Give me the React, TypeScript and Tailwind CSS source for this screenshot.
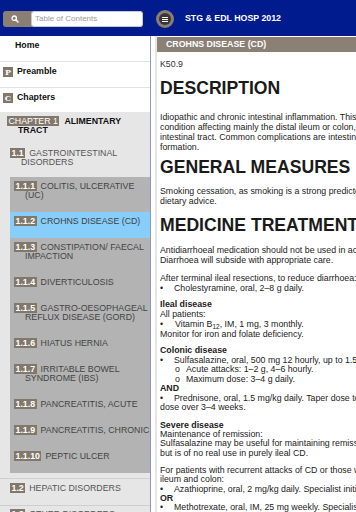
import React from "react";

function Badge({ children, bold = true }: { children: React.ReactNode; bold?: boolean }) {
  return (
    <span className={bold ? "bg-[#82776b] text-white px-[1.5px] mr-[4px] font-bold" : "bg-[#82776b] text-white px-[1.5px] mr-[5px]"}>
      {children}
    </span>
  );
}

function SubItem({ num, lines, active = false }: { num: string; lines: string[]; active?: boolean }) {
  return (
    <div
      className={
        active
          ? "bg-[#87cefa] pt-[5px] pb-[12px] pl-[15px] indent-[-11px] leading-[9px] whitespace-nowrap text-[#3f3f3f]"
          : "pt-[5px] pb-[12px] pl-[15px] indent-[-11px] leading-[9px] whitespace-nowrap text-[#444]"
      }
    >
      <Badge>{num}</Badge>
      {lines.map((l, i) => (
        <React.Fragment key={i}>
          {i > 0 && <br />}
          {l}
        </React.Fragment>
      ))}
    </div>
  );
}

function Bullet({ children, w = "w-[14px]" }: { children: React.ReactNode; w?: string }) {
  return (
    <div className="flex whitespace-nowrap">
      <span className={w === "w-[15px]" ? "w-[15px] shrink-0" : "w-[14px] shrink-0"}>•</span>
      <span>{children}</span>
    </div>
  );
}

function SubBullet({ children }: { children: React.ReactNode }) {
  return (
    <div className="flex whitespace-nowrap pl-[15px]">
      <span className="w-[11px] shrink-0">o</span>
      <span>{children}</span>
    </div>
  );
}

export default function App() {
  return (
    <div className="w-[356px] h-[512px] overflow-hidden flex flex-col bg-white font-['Liberation_Sans',Arial,sans-serif] text-[8.8px]">
      {/* Header */}
      <div className="h-[36px] shrink-0 bg-[#001b8e] flex items-start">
        <div className="ml-[3px] mt-[11px] w-[140px] h-[16px] flex rounded-[3px] bg-[#8a7f72]">
          <div className="w-[28px] flex items-center pl-[8px]">
            <svg width="8" height="8" viewBox="0 0 8 8">
              <circle cx="3.2" cy="3.2" r="2.2" fill="none" stroke="white" strokeWidth="1.3" />
              <line x1="4.8" y1="4.8" x2="7" y2="7" stroke="white" strokeWidth="1.5" strokeLinecap="round" />
            </svg>
          </div>
          <div className="flex-1 bg-white rounded-[3px] border border-[#c9c9c9] flex items-center pl-[3px] text-[8px] text-[#9a9a9a] leading-none">
            Table of Contents
          </div>
        </div>
        <div className="ml-[13px] mt-[10px] w-[18px] h-[18px] rounded-full bg-[#8a7f72] flex items-center justify-center">
          <div className="w-[12px] h-[12px] rounded-full bg-[#3a3632] flex flex-col items-center justify-center gap-[1px]">
            <div className="w-[6px] h-[1px] bg-white" />
            <div className="w-[6px] h-[1px] bg-white" />
            <div className="w-[6px] h-[1px] bg-white" />
          </div>
        </div>
        <div className="ml-[11px] mt-[13px] leading-[10px] text-white font-bold whitespace-nowrap">STG &amp; EDL HOSP 2012</div>
      </div>

      {/* Body */}
      <div className="flex flex-1 min-h-0">
        {/* Sidebar */}
        <div className="w-[151px] shrink-0 border-r border-[#8f94c2] overflow-hidden bg-white">
          <div className="h-[26px] border-b border-[#e2e2e2] pt-[5px] pl-[15px] leading-[9px] font-bold text-[#111]">Home</div>
          <div className="h-[26px] border-b border-[#e2e2e2] pt-[5px] pl-[3px] flex items-start">
            <span className="w-[10px] h-[10px] bg-[#82776b] text-white font-bold font-['DejaVu_Serif',serif] text-[8px] leading-[10px] text-center mr-[4px]">P</span>
            <span className="leading-[9px] font-bold text-[#111]">Preamble</span>
          </div>
          <div className="h-[24px] pt-[5px] pl-[3px] flex items-start">
            <span className="w-[10px] h-[10px] bg-[#82776b] text-white font-bold font-['DejaVu_Serif',serif] text-[8px] leading-[10px] text-center mr-[4px]">C</span>
            <span className="leading-[9px] font-bold text-[#111]">Chapters</span>
          </div>

          <div className="bg-[#e6e6e6] h-full">
            <div className="pt-[5px] pb-[9px] pl-[18px] indent-[-11px] leading-[9px] whitespace-nowrap">
              <Badge bold={false}>CHAPTER 1</Badge>
              <span className="font-bold text-[#111]">ALIMENTARY</span>
              <br />
              <span className="font-bold text-[#111]">TRACT</span>
            </div>
            <div className="pt-[5px] pb-[5px] border-b border-[#cfcfcf]">
              <div className="pl-[21px] indent-[-11px] leading-[9px] whitespace-nowrap text-[#555]">
                <Badge>1.1</Badge>GASTROINTESTINAL
                <br />
                DISORDERS
              </div>
              <div className="mt-[10px] ml-[10px] bg-[#b3b3b3]">
                <SubItem num="1.1.1" lines={["COLITIS, ULCERATIVE", "(UC)"]} />
                <SubItem num="1.1.2" lines={["CROHNS DISEASE (CD)"]} active />
                <SubItem num="1.1.3" lines={["CONSTIPATION/ FAECAL", "IMPACTION"]} />
                <SubItem num="1.1.4" lines={["DIVERTICULOSIS"]} />
                <SubItem num="1.1.5" lines={["GASTRO-OESOPHAGEAL", "REFLUX DISEASE (GORD)"]} />
                <SubItem num="1.1.6" lines={["HIATUS HERNIA"]} />
                <SubItem num="1.1.7" lines={["IRRITABLE BOWEL", "SYNDROME (IBS)"]} />
                <SubItem num="1.1.8" lines={["PANCREATITIS, ACUTE"]} />
                <SubItem num="1.1.9" lines={["PANCREATITIS, CHRONIC"]} />
                <SubItem num="1.1.10" lines={["PEPTIC ULCER"]} />
              </div>
            </div>
            <div className="h-[27px] pt-[5px] pl-[10px] leading-[9px] whitespace-nowrap text-[#555] border-b border-[#cfcfcf]">
              <Badge>1.2</Badge>HEPATIC DISORDERS
            </div>
            <div className="pt-[4px] pl-[10px] leading-[9px] whitespace-nowrap text-[#555]">
              <Badge>1.3</Badge>OTHER DISORDERS
            </div>
          </div>
        </div>

        {/* Content */}
        <div className="flex-1 min-w-0 pl-[4px] overflow-hidden">
          <div className="h-full border-l-2 border-[#e6e6e6] overflow-hidden">
            <div className="mt-[1px] h-[15px] leading-[15px] pl-[9px] bg-[#8a8075] text-white font-bold whitespace-nowrap">
              CROHNS DISEASE (CD)
            </div>
            <div className="px-[3px] text-[#222] whitespace-nowrap">
              <div className="mt-[7px] leading-[10px] text-[#333]">K50.9</div>
              <div className="mt-[9px] h-[20px] leading-[20px] text-[17.6px] font-bold text-[#1a1a1a]">DESCRIPTION</div>
              <div className="mt-[14px] leading-[10px]">
                <div>Idiopathic and chronic intestinal inflammation. This is a transmural</div>
                <div>condition affecting mainly the distal ileum or colon, but may affect the entire</div>
                <div>intestinal tract. Common complications are intestinal obstruction and fistula</div>
                <div>formation.</div>
              </div>
              <div className="mt-[5px] h-[20px] leading-[20px] text-[17.6px] font-bold text-[#1a1a1a]">GENERAL MEASURES</div>
              <div className="mt-[9px] leading-[10px]">
                <div>Smoking cessation, as smoking is a strong predictor of relapse. Nutritional and</div>
                <div>dietary advice.</div>
              </div>
              <div className="mt-[9px] h-[20px] leading-[20px] text-[17.6px] font-bold text-[#1a1a1a]">MEDICINE TREATMENT</div>
              <div className="mt-[10px] leading-[10px]">
                <div>Antidiarrhoeal medication should not be used in acute attacks.</div>
                <div>Diarrhoea will subside with appropriate care.</div>
              </div>
              <div className="mt-[9px] leading-[9.5px]">
                <div>After terminal ileal resections, to reduce diarrhoea:</div>
                <Bullet>Cholestyramine, oral, 2–8 g daily.</Bullet>
              </div>
              <div className="mt-[6px] leading-[10px]">
                <div className="font-bold">Ileal disease</div>
                <div>All patients:</div>
                <Bullet w="w-[15px]">
                  Vitamin B<sub className="text-[6.5px] leading-none">12</sub>, IM, 1 mg, 3 monthly.
                </Bullet>
                <div>Monitor for iron and folate deficiency.</div>
              </div>
              <div className="mt-[7px] leading-[9.5px]">
                <div className="font-bold">Colonic disease</div>
                <Bullet>Sulfasalazine, oral, 500 mg 12 hourly, up to 1.5 g 12 hourly.</Bullet>
                <SubBullet>Acute attacks: 1–2 g, 4–6 hourly.</SubBullet>
                <SubBullet>Maximum dose: 3–4 g daily.</SubBullet>
                <div className="font-bold">AND</div>
                <Bullet>Prednisone, oral, 1.5 mg/kg daily. Taper dose to the lowest effective</Bullet>
                <div>dose over 3–4 weeks.</div>
              </div>
              <div className="mt-[8px] leading-[9.4px]">
                <div className="font-bold">Severe disease</div>
                <div>Maintenance of remission:</div>
                <div>Sulfasalazine may be useful for maintaining remission in colonic disease,</div>
                <div>but is of no real use in purely ileal CD.</div>
              </div>
              <div className="mt-[8px] leading-[9.3px]">
                <div>For patients with recurrent attacks of CD or those with extensive disease of the</div>
                <div>ileum and colon:</div>
                <Bullet>Azathioprine, oral, 2 mg/kg daily. Specialist initiated.</Bullet>
                <div className="font-bold">OR</div>
                <Bullet>Methotrexate, oral, IM, 25 mg weekly. Specialist initiated.</Bullet>
              </div>
            </div>
          </div>
        </div>
      </div>
    </div>
  );
}
